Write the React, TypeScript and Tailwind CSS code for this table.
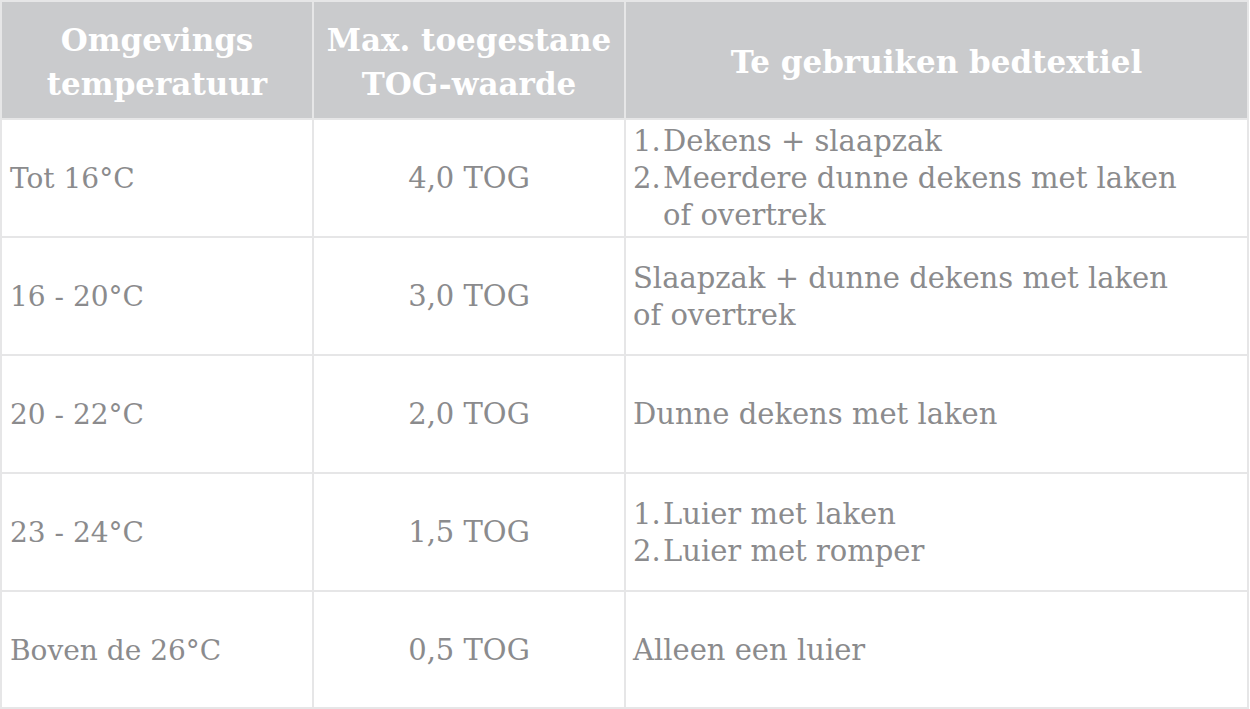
const rows: { temp: string; tog: string; items: string[][]; list: boolean }[] = [
  { temp: "Tot 16°C", tog: "4,0 TOG", items: [["Dekens + slaapzak"], ["Meerdere dunne dekens met laken", "of overtrek"]], list: true },
  { temp: "16 - 20°C", tog: "3,0 TOG", items: [["Slaapzak + dunne dekens met laken", "of overtrek"]], list: false },
  { temp: "20 - 22°C", tog: "2,0 TOG", items: [["Dunne dekens met laken"]], list: false },
  { temp: "23 - 24°C", tog: "1,5 TOG", items: [["Luier met laken"], ["Luier met romper"]], list: true },
  { temp: "Boven de 26°C", tog: "0,5 TOG", items: [["Alleen een luier"]], list: false },
];

function Lines({ lines }: { lines: string[] }) {
  return (
    <>
      {lines.map((l, j) => (
        <span key={j}>
          {j > 0 && <br />}
          {l}
        </span>
      ))}
    </>
  );
}

export default function App() {
  return (
    <div
      className="w-[1250px] h-[709px] bg-white"
      style={{ fontFamily: '"DejaVu Serif", serif' }}
    >
      <div className="grid grid-cols-[310px_310px_621px] grid-rows-[116px_116px_116px_116px_116px_115px] gap-[2px] bg-[#e6e6e7] p-[2px] w-[1249px] h-[709px]">
        <div className="bg-[#cacbcd] flex items-center justify-center pt-[4px] text-center text-white font-bold text-[31px] leading-[44px]">
          Omgevings<br />temperatuur
        </div>
        <div className="bg-[#cacbcd] flex items-center justify-center pt-[4px] text-center text-white font-bold text-[31px] leading-[44px]">
          Max. toegestane<br />TOG-waarde
        </div>
        <div className="bg-[#cacbcd] flex items-center justify-center pt-[4px] text-center text-white font-bold text-[31px] leading-[44px]">
          Te gebruiken bedtextiel
        </div>
        {rows.map((r) => (
          <div key={r.temp} className="contents">
            <div className="bg-white flex items-center pl-[8px] pt-[1px] text-[#8b8b8d] text-[28px] leading-[37px]">
              {r.temp}
            </div>
            <div className="bg-white flex items-center justify-center pt-[1px] text-[#8b8b8d] text-[29px] leading-[37px]">
              {r.tog}
            </div>
            <div className="bg-white flex items-center pl-[7px] pt-[1px] text-[#8b8b8d] text-[29px] leading-[37px]">
              {r.list ? (
                <ol className="m-0 p-0">
                  {r.items.map((lines, i) => (
                    <li key={i} className="flex">
                      <span className="w-[30px] shrink-0">{i + 1}.</span>
                      <span>
                        <Lines lines={lines} />
                      </span>
                    </li>
                  ))}
                </ol>
              ) : (
                <p>
                  <Lines lines={r.items[0]} />
                </p>
              )}
            </div>
          </div>
        ))}
      </div>
    </div>
  );
}
